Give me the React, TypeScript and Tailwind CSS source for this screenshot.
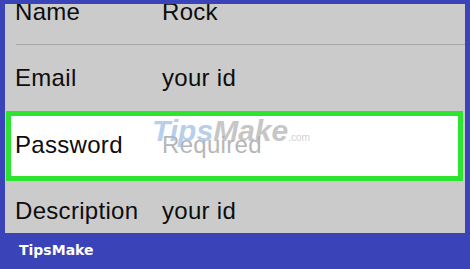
import React from "react";

function Row({ label, value, muted }: { label: string; value: string; muted?: boolean }) {
  return (
    <>
      <span className="w-[147px] shrink-0">{label}</span>
      <span className={muted ? "text-[#b6b6b6]" : ""}>{value}</span>
    </>
  );
}

export default function App() {
  return (
    <div className="w-[470px] h-[269px] bg-[#3a43b7] pt-[4px] px-[5px] flex flex-col overflow-hidden">
      <div
        className="relative h-[229px] shrink-0 bg-[#cbcbcb] overflow-hidden flex flex-col text-[24px] leading-[24px] tracking-[0.3px] text-[#0d0d0d]"
        style={{ fontFamily: '"Liberation Sans", Arial, sans-serif' }}
      >
        <div className="h-[65px] -mt-[25px] shrink-0 flex items-center pl-[10px]">
          <Row label="Name" value="Rock" />
        </div>
        <div className="h-px shrink-0 bg-[#a8a8a8] ml-[11px]" />
        <div className="h-[66px] shrink-0 flex items-center pl-[10px]">
          <Row label="Email" value="your id" />
        </div>
        <div className="h-[70px] shrink-0 ml-[1px] mr-[2px] border-[5px] border-[#2de42f] bg-white flex items-center pl-[4px] pb-[3px]">
          <Row label="Password" value="Required" muted />
        </div>
        <div className="h-[60px] shrink-0 flex items-center pl-[10px]">
          <Row label="Description" value="your id" />
        </div>
        <div className="absolute left-[147px] top-[112px] flex items-baseline italic font-bold text-[30px] leading-[30px] tracking-normal opacity-75 pointer-events-none">
          <span className="text-[#9fbfe6]">Tips</span>
          <span className="text-[#b3b3b3]">Make</span>
          <span className="text-[10px] leading-[10px] text-[#c4c4c4] font-normal not-italic">.com</span>
        </div>
      </div>
      <div
        className="pt-[10px] pl-[14px] text-white font-bold text-[14px] leading-[14px]"
        style={{ fontFamily: '"DejaVu Sans", Verdana, sans-serif' }}
      >
        TipsMake
      </div>
    </div>
  );
}
